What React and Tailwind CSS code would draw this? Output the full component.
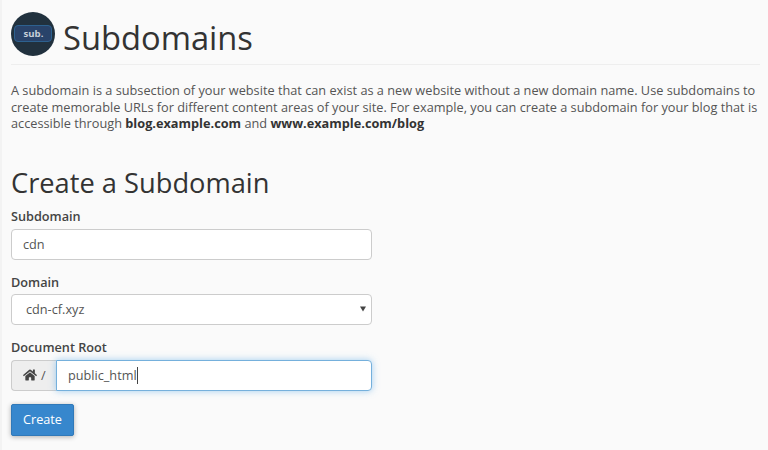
import { FaHome } from "react-icons/fa";

function Label({ children }) {
  return <label className="block h-[18px] text-[12.7px] leading-[18px] font-semibold text-[#444]">{children}</label>;
}

export default function App() {
  return (
    <div className="h-[450px] w-[768px] overflow-hidden border-l-2 border-[#f3f3f3] bg-[#fafafa] pl-[9px] font-['Open_Sans','Noto_Sans',sans-serif] text-[12.7px] text-[#555]">
      <header className="flex h-[65px] w-[749px] border-b border-[#eeeeee] pt-3">
        <div className="flex h-[44px] w-[44px] shrink-0 items-center justify-center rounded-full bg-[#21313e] pb-[1px]">
          <div className="flex h-[17px] w-[38px] items-center justify-center rounded-[4px] border-[1.5px] border-[#2d618f] bg-[#29436a] pl-[1px] text-[9.6px] leading-none font-bold text-[#c6ced8]">
            sub.
          </div>
        </div>
        <h1 className="ml-[8px] mt-[4px] text-[32.7px] leading-[44px] whitespace-nowrap text-[#333]">Subdomains</h1>
      </header>
      <div className="mt-[17px] text-[12.74px] leading-[16.5px] whitespace-nowrap">
        <p>A subdomain is a subsection of your website that can exist as a new website without a new domain name. Use subdomains to</p>
        <p>create memorable URLs for different content areas of your site. For example, you can create a subdomain for your blog that is</p>
        <p>accessible through <b className="text-[#333]">blog.example.com</b> and <b className="text-[#333]">www.example.com/blog</b></p>
      </div>
      <h2 className="mt-[32px] h-[43px] text-[27.25px] leading-[37px] text-[#333]">Create a Subdomain</h2>
      <form className="w-[361px]">
        <Label>Subdomain</Label>
        <div className="mt-[4px] flex h-[31px] items-center rounded-[4px] border border-[#ccc] bg-white pt-[2px] pl-[11px]">cdn</div>
        <div className="mt-[12px] pt-[1px]"><Label>Domain</Label></div>
        <div className="mt-[3px] flex h-[31px] items-center justify-between rounded-[4px] border border-[#ccc] bg-white pr-[5px] pl-[14px]">
          <span className="pt-[2px]">cdn-cf.xyz</span>
          <svg width="6" height="6" viewBox="0 0 6 6"><path d="M0 .5h6L3 5.5z" fill="#444" /></svg>
        </div>
        <div className="mt-[13px]"><Label>Document Root</Label></div>
        <div className="mt-[4px] flex h-[31px]">
          <div className="flex w-[45px] items-center gap-[4px] rounded-l-[4px] border border-r-0 border-[#ccc] bg-[#eee] pl-[11px]">
            <FaHome size={14} color="#444" />
            <span className="pt-[1px]">/</span>
          </div>
          <div className="flex grow items-center rounded-r-[4px] border border-[#75b0dc] bg-white pl-[11px] shadow-[0_0_7px_rgba(102,175,233,0.6)]">
            <span className="pt-[2px]">public_html</span>
            <span className="h-[17px] w-px bg-[#444]" />
          </div>
        </div>
        <button type="button" className="mt-[13px] h-[32px] w-[63px] rounded-[2px] border border-[#3079b9] bg-[#3787cd] pt-[1px] text-[12.7px] text-white shadow-[0_1px_5px_rgba(0,0,0,0.3)]">Create</button>
      </form>
    </div>
  );
}
